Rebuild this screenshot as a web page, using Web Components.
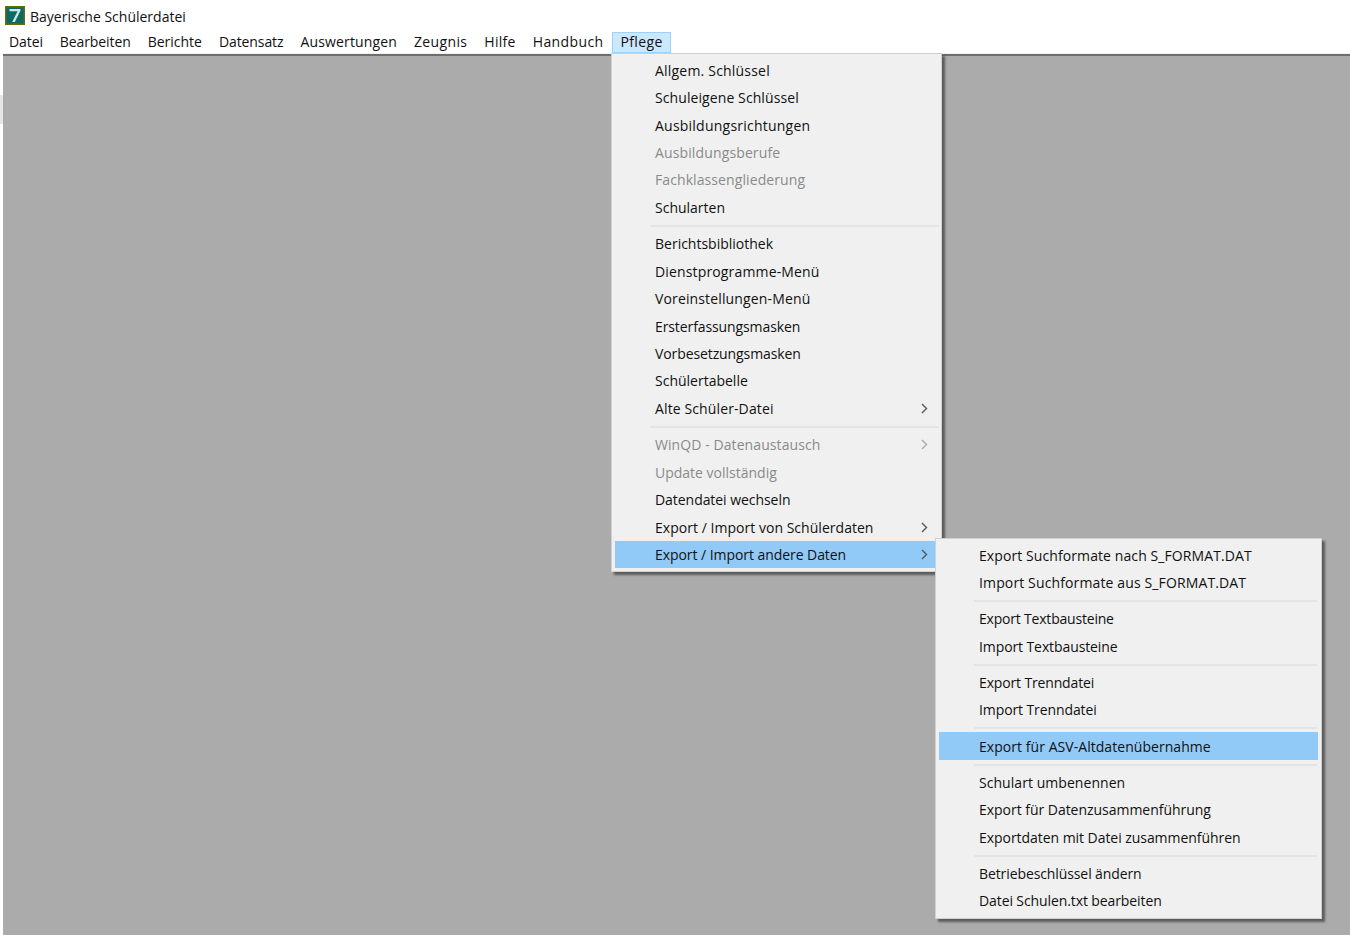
<!DOCTYPE html>
<html>
<head>
<meta charset="utf-8">
<title>Bayerische Schülerdatei</title>
<style>
  html, body { margin: 0; height: 100%; overflow: hidden; }
  body { font-family: "Open Sans", "Noto Sans", "Liberation Sans", sans-serif; color: #111; }
</style>
</head>
<body>
<app-window>
  <pop-menu style="left: 611px; top: 53px; width: 331px; --row: 27.45px; --pad-top: 2.45px; --pad-bottom: 2.55px; --hr-right: -1px;" id="main"></pop-menu>
  <pop-menu style="left: 935px; top: 538px; width: 387px; --row: 27.33px; --pad-top: 2.5px; --pad-bottom: 3.5px; --hr-right: 1px;" id="sub"></pop-menu>
</app-window>

<script>
const FONT_CSS = `font-size: 14px;`;

class TitleBar extends HTMLElement {
  constructor() {
    super();
    this.attachShadow({ mode: 'open' }).innerHTML = `
      <style>
        :host { display: flex; align-items: center; box-sizing: border-box; height: 31px; padding: 2px 0 0 5px; gap: 5px; background: #fff; ${FONT_CSS} letter-spacing: 0; }
        svg { display: block; margin-top: -2px; }
      </style>
      <svg width="20" height="19" viewBox="0 0 20 19">
        <rect x="0.75" y="0.75" width="18.5" height="17.5" fill="#0a6b66" stroke="#6b6a10" stroke-width="1.5"/>
        <path d="M4.5 3h11v1.6L9.8 16H7.2l5.4-10.8H4.5z" fill="#cfe8e4"/>
      </svg>
      <slot></slot>`;
  }
}
customElements.define('title-bar', TitleBar);

class MenuBar extends HTMLElement {
  set items(list) {
    this.shadowRoot.querySelector('div').innerHTML = list.map(([t, ls]) =>
      `<span class="${t === 'Pflege' ? 'open' : ''}" style="letter-spacing: ${ls}px">${t}</span>`).join('');
  }
  constructor() {
    super();
    this.attachShadow({ mode: 'open' }).innerHTML = `
      <style>
        :host { display: block; height: 22px; background: #fff; ${FONT_CSS} }
        div { display: flex; padding-left: 0.5px; height: 22px; }
        span { margin-top: 1px; height: 21px; padding: 0 7.5px; line-height: 18px; box-sizing: border-box; border: 1px solid transparent; }
        span.open { background: #cce8ff; border-color: #99d1ff; }
      </style>
      <div></div>`;
  }
}
customElements.define('menu-bar', MenuBar);

class AppWindow extends HTMLElement {
  constructor() {
    super();
    this.attachShadow({ mode: 'open' }).innerHTML = `
      <style>
        :host { display: flex; flex-direction: column; height: 935px; position: relative; background: #fff; }
        .client { flex: 1; margin-left: 3px; background: #ababab; border-top: 2px solid #6e6e6e; }
        .light { height: 1px; margin-left: 3px; background: #f0f0f0; }
        .nick { position: absolute; left: 0; top: 95px; width: 3px; height: 29px; background: #e4e4e4; }
      </style>
      <title-bar>Bayerische Schülerdatei</title-bar>
      <menu-bar></menu-bar>
      <div class="light"></div>
      <div class="client"></div>
      <div class="nick"></div>
      <slot></slot>`;
    this.shadowRoot.querySelector('menu-bar').items = [
      ['Datei', -0.1], ['Bearbeiten', -0.1], ['Berichte', 0], ['Datensatz', -0.1], ['Auswertungen', 0.15],
      ['Zeugnis', 0.35], ['Hilfe', 0.3], ['Handbuch', 0.37], ['Pflege', 0.4],
    ];
  }
}
customElements.define('app-window', AppWindow);

class PopMenu extends HTMLElement {
  set entries(list) {
    const chevron = `<svg width="7" height="11" viewBox="0 0 7 11"><path d="M1 1l4.5 4.5L1 10" fill="none" stroke="currentColor" stroke-width="1.4"/></svg>`;
    this.shadowRoot.querySelector('.list').innerHTML = list.map((e) => {
      if (e === '-') return '<hr>';
      const cls = [e.off ? 'off' : '', e.hot ? 'hot' : ''].join(' ');
      return `<div class="row ${cls}"><span style="letter-spacing: ${e.ls || 0}px">${e.t}</span>${e.sub ? chevron : ''}</div>`;
    }).join('');
  }
  constructor() {
    super();
    this.attachShadow({ mode: 'open' }).innerHTML = `
      <style>
        :host {
          display: block; position: absolute; box-sizing: border-box;
          background: #f0f0f0; border: 1px solid #d0d0d0;
          padding: var(--pad-top) 3px var(--pad-bottom);
          box-shadow: 3px 3px 2px rgba(40, 40, 40, 0.6); ${FONT_CSS}
        }
        .row { display: flex; align-items: center; justify-content: space-between; height: var(--row); padding: 0 10px 0 40px; box-sizing: border-box; }
        .row svg { color: #555; }
        .off { color: #8a8a8a; }
        .off svg { color: #aaa; }
        .hot { background: #91c9f7; }
        hr { height: 2px; margin: 4px var(--hr-right) 3px 35px; padding: 0; border: 0; background: #e4e4e4; }
      </style>
      <div class="list"></div>`;
  }
}
customElements.define('pop-menu', PopMenu);

document.getElementById('main').entries = [
  { t: 'Allgem. Schlüssel', ls: 0.2 }, { t: 'Schuleigene Schlüssel', ls: 0.09 }, { t: 'Ausbildungsrichtungen', ls: 0.23 },
  { t: 'Ausbildungsberufe', off: true, ls: 0.13 }, { t: 'Fachklassengliederung', off: true, ls: 0.09 }, { t: 'Schularten' }, '-',
  { t: 'Berichtsbibliothek' }, { t: 'Dienstprogramme-Menü', ls: 0.15 }, { t: 'Voreinstellungen-Menü', ls: 0.14 },
  { t: 'Ersterfassungsmasken', ls: -0.1 }, { t: 'Vorbesetzungsmasken', ls: -0.1 }, { t: 'Schülertabelle' },
  { t: 'Alte Schüler-Datei', sub: true, ls: 0.12 }, '-',
  { t: 'WinQD - Datenaustausch', off: true, sub: true, ls: 0.08 }, { t: 'Update vollständig', off: true },
  { t: 'Datendatei wechseln', ls: -0.05 }, { t: 'Export / Import von Schülerdaten', sub: true, ls: 0.03 },
  { t: 'Export / Import andere Daten', sub: true, hot: true, ls: -0.06 },
];
document.getElementById('sub').entries = [
  { t: 'Export Suchformate nach S_FORMAT.DAT', ls: 0.09 }, { t: 'Import Suchformate aus S_FORMAT.DAT', ls: 0.13 }, '-',
  { t: 'Export Textbausteine', ls: -0.2 }, { t: 'Import Textbausteine', ls: -0.1 }, '-',
  { t: 'Export Trenndatei', ls: -0.15 }, { t: 'Import Trenndatei', ls: -0.1 }, '-',
  { t: 'Export für ASV-Altdatenübernahme', hot: true, ls: 0.05 }, '-',
  { t: 'Schulart umbenennen', ls: 0.05 }, { t: 'Export für Datenzusammenführung', ls: -0.03 }, { t: 'Exportdaten mit Datei zusammenführen', ls: -0.05 }, '-',
  { t: 'Betriebeschlüssel ändern', ls: -0.1 }, { t: 'Datei Schulen.txt bearbeiten', ls: -0.1 },
];
</script>
</body>
</html>
